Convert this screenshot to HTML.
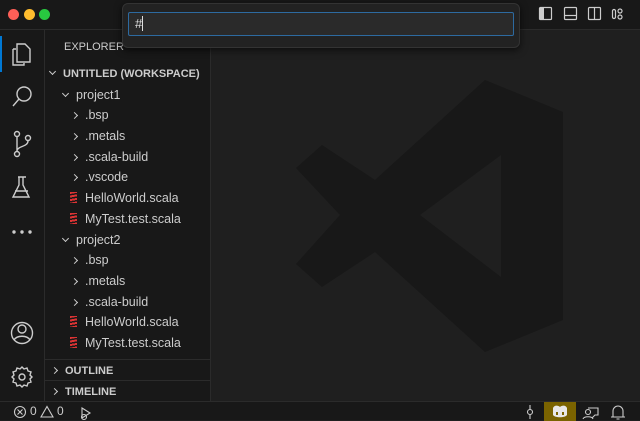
<!DOCTYPE html>
<html><head><meta charset="utf-8"><style>
*{margin:0;padding:0;box-sizing:border-box}
body{width:640px;height:420px;overflow:hidden;background:#1f1f1f;font-family:"Liberation Sans",sans-serif;color:#ccc;position:relative}
.abs{position:absolute}
#title{left:0;top:0;width:640px;height:30px;background:#181818;border-bottom:1px solid #2b2b2b}
#act{left:0;top:30px;width:45px;height:371px;background:#181818;border-right:1px solid #2b2b2b}
#side{left:45px;top:30px;width:166px;height:371px;background:#181818;border-right:1px solid #2b2b2b}
#status{left:0;top:401px;width:640px;height:19px;background:#181818;border-top:1px solid #2b2b2b}
.row{position:absolute;left:0;height:20px;line-height:20px;font-size:12.5px;color:#ccc;white-space:nowrap;margin-top:1px}
.hdr{font-weight:bold;font-size:11px}
.chev{display:inline-block;width:5px;height:5px;border-right:1.3px solid #ccc;border-bottom:1.3px solid #ccc;transform:rotate(-45deg);margin-right:8px;vertical-align:1px}
.down{transform:rotate(45deg);vertical-align:3px}
.sc{display:inline-block;width:7px;height:11px;margin-right:8px;vertical-align:-1px;background:repeating-linear-gradient(170deg,#d33 0 2px,transparent 2px 3.5px)}
</style></head><body>
<div id="title" class="abs">
<div class="abs" style="left:8px;top:9px;width:11px;height:11px;border-radius:50%;background:#fe5f57"></div>
<div class="abs" style="left:24px;top:9px;width:11px;height:11px;border-radius:50%;background:#febc2e"></div>
<div class="abs" style="left:39px;top:9px;width:11px;height:11px;border-radius:50%;background:#28c840"></div>
<svg class="abs" style="left:535px;top:5px" width="100" height="18" fill="none" stroke="#ccc" stroke-width="1.2">
<rect x="4.5" y="2.5" width="12" height="12" rx="1"/><rect x="5" y="3" width="4" height="11" fill="#ccc" stroke="none"/>
<rect x="29.5" y="2.5" width="12" height="12" rx="1"/><line x1="30" y1="10.5" x2="41" y2="10.5"/>
<rect x="53.5" y="2.5" width="12" height="12" rx="1"/><line x1="59.5" y1="3" x2="59.5" y2="14"/>
<rect x="77.5" y="4.5" width="3" height="9" rx="1.5"/><circle cx="85" cy="6" r="2"/><circle cx="85" cy="12" r="2"/>
</svg>
</div>
<svg class="abs" style="left:211px;top:31px" width="429" height="370"><g transform="translate(-211,-31)">
<polygon fill="#181818" points="485,80 563,112 563,320 485,352 375,252 322,287 296,264 340,215 296,168 322,145 375,180"/>
<polygon fill="#1f1f1f" points="420,215 501,155 501,277"/>
</g></svg>
<div id="act" class="abs">
<div class="abs" style="left:0;top:6px;width:2px;height:36px;background:#0078d4"></div>
<svg class="abs" style="left:0;top:0" width="45" height="371" fill="none" stroke="#ccc" stroke-width="1.4">
<path d="M17 14h8l5 5v13H17z"/><path d="M13 19h3M13 19v16h11v-2"/>
<circle cx="24" cy="64" r="7"/><path d="M19 69l-6 7"/>
<circle cx="17" cy="104" r="2.5"/><circle cx="17" cy="124" r="2.5"/><circle cx="28" cy="108" r="2.5"/><path d="M17 107v15M28 111c0 6-11 5-11 10"/>
<path d="M18 147h8M19 147v8l-6 12h16l-6-12v-8M15 161h13"/>
<circle cx="14" cy="202" r="1" fill="#ccc"/><circle cx="22" cy="202" r="1" fill="#ccc"/><circle cx="30" cy="202" r="1" fill="#ccc"/>
<circle cx="22" cy="303" r="10.5"/><circle cx="22" cy="299" r="4"/><path d="M14 310c3-5 13-5 16 0"/>
<circle cx="22" cy="347" r="3"/><path d="M22 337l2 2 3-1 1 3 3 1-1 3 2 2-2 2 1 3-3 1-1 3-3-1-2 2-2-2-3 1-1-3-3-1 1-3-2-2 2-2-1-3 3-1 1-3 3 1z"/>
</svg>
</div>
<div id="side" class="abs">
<div class="row" style="left:19px;top:6px;font-size:11px">EXPLORER</div>
<div class="row hdr" style="left:5px;top:33px"><span class="chev down"></span>UNTITLED (WORKSPACE)</div>
<div class="row" style="left:18px;top:54px"><span class="chev down"></span>project1</div>
<div class="row" style="left:27px;top:74px"><span class="chev"></span>.bsp</div>
<div class="row" style="left:27px;top:95px"><span class="chev"></span>.metals</div>
<div class="row" style="left:27px;top:116px"><span class="chev"></span>.scala-build</div>
<div class="row" style="left:27px;top:136px"><span class="chev"></span>.vscode</div>
<div class="row" style="left:25px;top:157px"><span class="sc"></span>HelloWorld.scala</div>
<div class="row" style="left:25px;top:178px"><span class="sc"></span>MyTest.test.scala</div>
<div class="row" style="left:18px;top:199px"><span class="chev down"></span>project2</div>
<div class="row" style="left:27px;top:219px"><span class="chev"></span>.bsp</div>
<div class="row" style="left:27px;top:240px"><span class="chev"></span>.metals</div>
<div class="row" style="left:27px;top:261px"><span class="chev"></span>.scala-build</div>
<div class="row" style="left:25px;top:281px"><span class="sc"></span>HelloWorld.scala</div>
<div class="row" style="left:25px;top:302px"><span class="sc"></span>MyTest.test.scala</div>
<div class="abs" style="left:0;top:329px;width:166px;height:1px;background:#2b2b2b"></div>
<div class="row hdr" style="left:7px;top:330px"><span class="chev"></span>OUTLINE</div>
<div class="abs" style="left:0;top:350px;width:166px;height:1px;background:#2b2b2b"></div>
<div class="row hdr" style="left:7px;top:351px"><span class="chev"></span>TIMELINE</div>
</div>
<div id="status" class="abs">
<svg class="abs" style="left:0;top:0" width="640" height="19" fill="none" stroke="#ccc" stroke-width="1.1">
<circle cx="20" cy="10" r="5.5"/><path d="M17.5 7.5l5 5M22.5 7.5l-5 5"/>
<path d="M47 4.5l6 10.5H41z"/>
<path d="M82 6l8 5-8 5z"/><circle cx="84" cy="15" r="2.5"/>
<circle cx="530" cy="10" r="2.5"/><path d="M530 3v4.5M530 12.5V17"/>
<path d="M588 6h10v7h-3l-3 3"/><circle cx="588" cy="10" r="2.5"/><path d="M583 17c1-3 9-3 10 0"/>
<path d="M613 15V9a5 5 0 0 1 10 0v6h-10zM611 15h14M616.5 17h3"/>
</svg>
<div class="abs" style="left:30px;top:2px;font-size:12px">0</div>
<div class="abs" style="left:57px;top:2px;font-size:12px">0</div>
<div class="abs" style="left:544px;top:0;width:32px;height:19px;background:#7a6300"></div>
<svg class="abs" style="left:544px;top:0" width="32" height="19" fill="#e8e8e8"><path d="M9 6c1-3 5-3 7-1 2-2 6-2 7 1v7c-2 3-12 3-14 0z"/><rect x="12" y="10" width="2" height="3" fill="#7a6300"/><rect x="18" y="10" width="2" height="3" fill="#7a6300"/></svg>
</div>
<div class="abs" style="left:122px;top:3px;width:398px;height:45px;background:#222;border:1px solid #333;border-radius:6px;box-shadow:0 2px 8px #000a"></div>
<div class="abs" style="left:128px;top:12px;width:386px;height:24px;background:#2a2a2a;border:1px solid #2d6aa0;border-radius:2px;font-size:13px;line-height:22px;padding-left:6px;color:#ddd">#<span style="display:inline-block;width:1px;height:15px;background:#ddd;vertical-align:-3px"></span></div>
</body></html>
